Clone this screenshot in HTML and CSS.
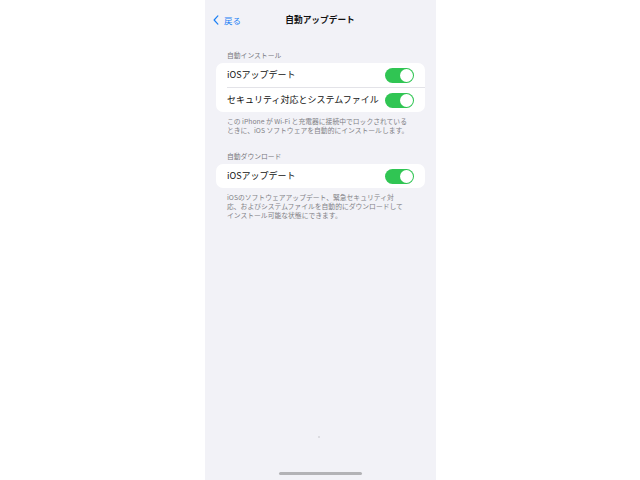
FILE: index.html
```html
<!DOCTYPE html>
<html lang="ja">
<head>
<meta charset="utf-8">
<title>自動アップデート</title>
<link rel="stylesheet" href="styles.css">
</head>
<body>
<div class="phone">
  <div class="nav">
    <div class="back">
      <svg class="chev" viewBox="0 0 8 13" width="6" height="10"><path d="M6.5 1 L1.5 6.5 L6.5 12" fill="none" stroke="#1a7ff5" stroke-width="1.6" stroke-linecap="round" stroke-linejoin="round"/></svg>
      <span>戻る</span>
    </div>
    <div class="title">自動アップデート</div>
  </div>

  <div class="section first">
    <div class="sec-head">自動インストール</div>
    <div class="card">
      <div class="row"><span class="label">iOSアップデート</span><span class="toggle"><span class="knob"></span></span></div>
      <div class="sep"></div>
      <div class="row"><span class="label">セキュリティ対応とシステムファイル</span><span class="toggle"><span class="knob"></span></span></div>
    </div>
    <div class="sec-foot">この iPhone が Wi-Fi と充電器に接続中でロックされている<br>ときに、iOS ソフトウェアを自動的にインストールします。</div>
  </div>

  <div class="section second">
    <div class="sec-head">自動ダウンロード</div>
    <div class="card">
      <div class="row"><span class="label">iOSアップデート</span><span class="toggle"><span class="knob"></span></span></div>
    </div>
    <div class="sec-foot">iOSのソフトウェアアップデート、緊急セキュリティ対<br>応、およびシステムファイルを自動的にダウンロードして<br>インストール可能な状態にできます。</div>
  </div>

  <div class="bottom">
    <div class="dot"></div>
    <div class="home"></div>
  </div>
</div>
</body>
</html>
```
FILE: styles.css
```css
html, body {
  margin: 0;
  padding: 0;
  background: #ffffff;
}
body {
  width: 640px;
  height: 480px;
  overflow: hidden;
  font-family: "Noto Sans CJK JP", "Noto Sans", sans-serif;
}
.phone {
  margin-left: 205px;
  width: 231px;
  height: 480px;
  background: #f2f2f7;
  display: flex;
  flex-direction: column;
}
.nav {
  height: 40px;
  display: flex;
  align-items: center;
  justify-content: center;
  position: relative;
}
.back {
  position: absolute;
  left: 8px;
  top: 14px;
  display: flex;
  align-items: center;
  gap: 5px;
  color: #1a7ff5;
  font-size: 8.5px;
  line-height: 12px;
}
.chev {
  display: block;
}
.title {
  font-size: 8.7px;
  font-weight: 700;
  color: #111;
  line-height: 12px;
  margin-left: -1px;
}
.section {
  padding: 0 11px;
}
.first {
  margin-top: 11px;
}
.second {
  margin-top: 18px;
}
.sec-head {
  font-size: 6.8px;
  line-height: 9px;
  color: #77777c;
  padding-left: 11px;
  margin-bottom: 3px;
}
.card {
  background: #ffffff;
  border-radius: 7px;
}
.row {
  height: 24px;
  display: flex;
  align-items: center;
  justify-content: space-between;
  padding: 0 11px;
}
.label {
  font-size: 9px;
  color: #111;
  line-height: 12px;
}
.sep {
  height: 1px;
  background: #e3e3e8;
  margin-left: 11px;
}
.toggle {
  width: 29px;
  height: 15px;
  border-radius: 8px;
  background: #30c553;
  display: flex;
  align-items: center;
  justify-content: flex-end;
  padding-right: 1px;
  box-sizing: border-box;
}
.knob {
  width: 13px;
  height: 13px;
  border-radius: 50%;
  background: #ffffff;
}
.sec-foot {
  font-size: 6.8px;
  line-height: 8.7px;
  color: #818186;
  padding-left: 11px;
  margin-top: 5px;
  white-space: nowrap;
}
.bottom {
  margin-top: auto;
  display: flex;
  flex-direction: column;
  align-items: center;
}
.dot {
  width: 2px;
  height: 2px;
  border-radius: 50%;
  background: #d4d4da;
  margin-left: -3px;
}
.home {
  width: 83px;
  height: 3px;
  border-radius: 2px;
  background: #b3b3b6;
  margin-top: 34px;
  margin-bottom: 5px;
}
```
